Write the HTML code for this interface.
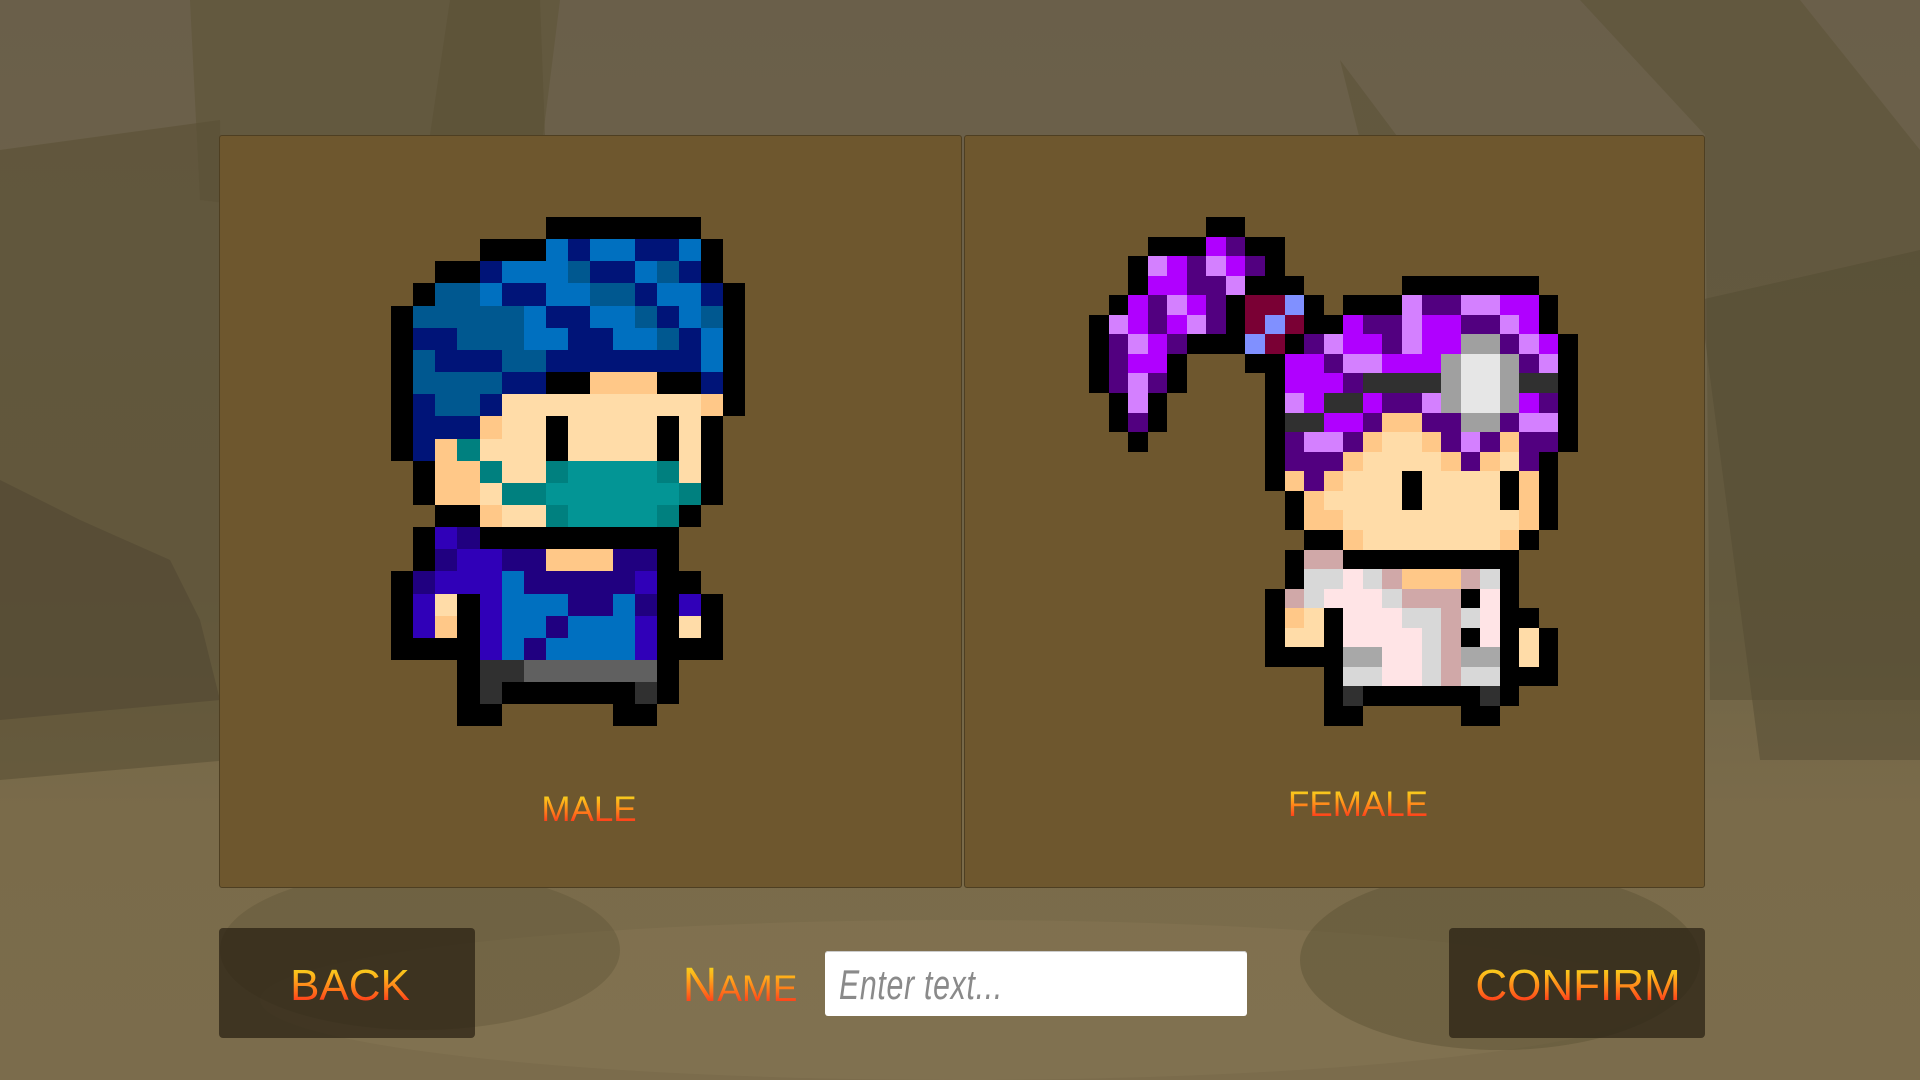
<!DOCTYPE html>
<html><head><meta charset="utf-8">
<style>
html,body{margin:0;padding:0;width:1920px;height:1080px;overflow:hidden;font-family:"Liberation Sans",sans-serif;position:relative;}
#bg{position:absolute;left:0;top:0;width:1920px;height:1080px;
background:linear-gradient(180deg,#6a5f4a 0%,#6d6249 30%,#6e6346 55%,#7a6b4a 75%,#7b6c4c 100%);}
.panel{position:absolute;top:135px;height:753px;background:#6e572e;border:1px solid #4e3f22;border-radius:3px;box-sizing:border-box;}
.lbl{position:absolute;font-weight:normal;text-align:center;line-height:1;
background:linear-gradient(180deg,#f0e020 0%,#ffb01a 30%,#ff6a1a 65%,#ff1a1a 100%);-webkit-background-clip:text;background-clip:text;color:transparent;
white-space:nowrap;}
.btn{position:absolute;top:928px;width:256px;height:110px;background:rgba(40,32,18,0.72);border-radius:4px;}
.inp{position:absolute;left:825px;top:951px;width:422px;height:65px;background:#fff;border-radius:3px;box-shadow:0 1px 0 #ccc inset;overflow:hidden;}
.ph{position:absolute;left:14px;top:10px;font-size:42px;color:#8a8a8a;font-style:italic;transform:scaleX(0.72);transform-origin:left;white-space:nowrap;letter-spacing:1px;}
svg{position:absolute;left:0;top:0;}
</style></head><body>
<div id="bg"></div>
<svg width="1920" height="1080">
 <polygon points="190,0 560,0 530,240 200,200" fill="#5d5337" opacity="0.55"/>
 <polygon points="450,0 540,0 545,135 430,135" fill="#5a5034" opacity="0.5"/>
 <polygon points="0,150 220,120 230,760 0,780" fill="#5a5036" opacity="0.6"/>
 <polygon points="0,480 80,520 170,560 200,620 220,700 0,720" fill="#4e4430" opacity="0.5"/>
 <polygon points="1580,0 1800,0 1920,150 1920,700 1710,700 1705,135" fill="#5b5236" opacity="0.55"/>
 <polygon points="1700,300 1920,250 1920,760 1760,760" fill="#524a30" opacity="0.45"/>
 <polygon points="1340,60 1400,140 1360,140" fill="#5a5034" opacity="0.5"/>
 <ellipse cx="960" cy="1000" rx="700" ry="80" fill="#8a7a58" opacity="0.35"/>
 <ellipse cx="1500" cy="960" rx="200" ry="90" fill="#5e5436" opacity="0.5"/>
 <ellipse cx="420" cy="950" rx="200" ry="80" fill="#5e5436" opacity="0.4"/>
</svg>
<div class="panel" style="left:219px;width:743px;"></div>
<div class="panel" style="left:964px;width:741px;"></div>
<svg id="spr" width="1920" height="1080"></svg>
<div class="lbl" style="left:489px;width:200px;top:792px;font-size:35px;">MALE</div>
<div class="lbl" style="left:1258px;width:200px;top:787px;font-size:35px;">FEMALE</div>
<div class="btn" style="left:219px;"></div>
<div class="btn" style="left:1449px;"></div>
<div class="lbl" style="left:250px;width:200px;top:964px;font-size:44px;">BACK</div>
<div class="lbl" style="left:1428px;width:300px;top:964px;font-size:44px;">CONFIRM</div>
<div class="lbl" style="left:660px;width:160px;top:962px;font-size:48px;">N<span style="font-size:37px">AME</span></div>
<div class="inp"><div class="ph">Enter text...</div></div>
<script>
var C={K:'#000',B:'#0070c0',N:'#001478',T:'#005890',S:'#ffdca8',O:'#ffc888',G:'#039595',g:'#00807f',P:'#3000b8',Q:'#200080',D:'#303030',M:'#606060',
V:'#b000ff',L:'#d480ff',U:'#520080',R:'#7a0034',E:'#8090ff',A:'#a0a0a0',W:'#e6e6e6',p:'#d0a8a8',w:'#d8d8d8',F:'#ffe4e6',H:'#a8a8a8'};
var male=[
'.......KKKKKKK..','....KKKBNBBNNBK.','..KKNBBBTNNBTNK.','.KTTBNNBBTTNBBNK','KTTTTTBNNBBTNBTK','KNNTTTBBNNBBTNBK',
'KTNNNTTNNNNNNNBK','KTTTTNNKKOOOKKNK','KNTTNSSSSSSSSSOK','KNNNOSSKSSSSKSK.','KNOgSSSKSSSSKSK.','.KOOgSSgGGGGgSK.',
'.KOOSggGGGGGGgK.','..KKOSSgGGGGgK..','.KPQKKKKKKKKK...','.KQPPQQOOOQQK...','KQPPPBQQQQQPKK..','KPSKPBBBQQBQKPK.',
'KPOKPBBQBBBPKSK.','KKKKPBQBBBBPKKK.','...KDDMMMMMMK...','...KDKKKKKKDK...','...KK.....KK....'];
var fem=[
'......KK.................','...KKKVUKK...............','..KLVULVUK...............','..KVVUULKKK.....KKKKKKK..',
'.KVULVUKRREK.KKKLUULLVVK.','KLVUVLUKRERKKVUULVVUULVK.','KULVUKKKERKULVVULVVAAULVK','KUVVK...KKVVULLVVVAWWAULK',
'KULUK....KVVVUDDDDAWWADDK','.KLK.....KLVDDVUULAWWAVUK','.KUK.....KDDVVUOOUUAAULLK','..K......KULLUOSSOULUOUUK',
'.........KUUUOSSSSOUOSUK.','.........KOUOSSSKSSSSKOK.','..........KOSSSSKSSSSKOK.','..........KOOSSSSSSSSSOK.',
'...........KKOSSSSSSSOK..','..........KppKKKKKKKKK...','..........KwwFwpOOOpwK...','.........KpwFFFwpppKFK...',
'.........KOSKFFFwwpwFKK..','.........KSSKFFFFwpKFKSK.','.........KKKKHHFFwpHHKSK.','............KwwFFwpwwKKK.',
'............KDKKKKKKDK...','............KK.....KK....'];
var s='';
function draw(g,x0,y0,cs){for(var r=0;r<g.length;r++)for(var c=0;c<g[r].length;c++){var ch=g[r][c];if(ch=='.')continue;
var x=Math.round(x0+c*cs),y=Math.round(y0+r*cs),x2=Math.round(x0+(c+1)*cs),y2=Math.round(y0+(r+1)*cs);
s+='<rect x="'+x+'" y="'+y+'" width="'+(x2-x)+'" height="'+(y2-y)+'" fill="'+C[ch]+'"/>';}}
draw(male,391,217,22.15);
draw(fem,1089,217,19.56);
document.getElementById('spr').innerHTML=s;
</script>
</body></html>
